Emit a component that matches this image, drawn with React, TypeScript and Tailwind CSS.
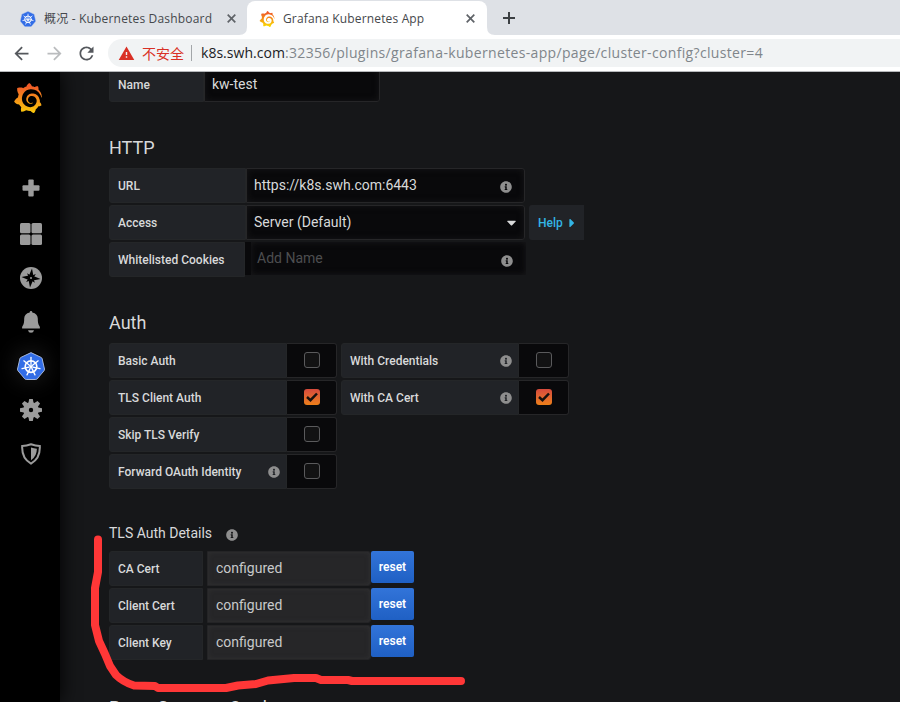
import React from "react";
import { SiGrafana } from "react-icons/si";
import { FaInfoCircle, FaCaretDown, FaCaretRight } from "react-icons/fa";
import { MdArrowBack, MdArrowForward, MdRefresh, MdWarning } from "react-icons/md";

const UI = "font-['Open_Sans','Noto_Sans_CJK_SC',sans-serif]";

function GrafanaMark({ size, id, top, bottom }: { size: number; id: string; top: string; bottom: string }) {
  return (
    <>
      <svg width="0" height="0" className="absolute">
        <defs>
          <linearGradient id={id} x1="0" y1="0" x2="0" y2="1">
            <stop offset="0.1" stopColor={top} />
            <stop offset="1" stopColor={bottom} />
          </linearGradient>
        </defs>
      </svg>
      <SiGrafana size={size} fill={`url(#${id})`} className="shrink-0" />
    </>
  );
}

function KubeMark({ size }: { size: number }) {
  return (
    <svg width={size} height={size} viewBox="0 0 28 28" className="shrink-0">
      <path
        d="M14 0.6 L24.2 5.4 Q25 5.9 25.2 6.8 L27.5 17 Q27.6 18 27 18.8 L20.3 26.8 Q19.6 27.5 18.6 27.5 H9.4 Q8.4 27.5 7.7 26.8 L1 18.8 Q0.4 18 0.5 17 L2.8 6.8 Q3 5.9 3.8 5.4 Z"
        fill="#326de6"
        stroke="#c9d6ee"
        strokeWidth="0.8"
      />
      <g stroke="#fff" fill="none" strokeWidth="1.3" strokeLinecap="round">
        <circle cx="14" cy="14.6" r="5.8" strokeWidth="1.7" />
        {[0, 1, 2, 3, 4, 5, 6].map((i) => (
          <path key={i} d="M14 12.6V5.4" transform={`rotate(${(i * 360) / 7} 14 14.6)`} />
        ))}
      </g>
      <circle cx="14" cy="14.6" r="1.6" fill="#fff" />
    </svg>
  );
}

function Close() {
  return (
    <svg width="9" height="9" viewBox="0 0 9 9" className="shrink-0" stroke="#5f6368" strokeWidth="1.7">
      <path d="M0.7 0.7L8.3 8.3M8.3 0.7L0.7 8.3" />
    </svg>
  );
}

function TabStrip() {
  return (
    <div className="flex h-[35px] bg-[#dee1e6] text-[#45484c]">
      <div className="flex w-[247px] items-center pl-[20px] pt-[2px]">
        <KubeMark size={16} />
        <span className="ml-[8px] w-[168px] whitespace-nowrap text-[12px] tracking-[0.18px]">概况 - Kubernetes Dashboard</span>
        <span className="ml-[15px] flex"><Close /></span>
      </div>
      <div className="relative mt-px flex w-[240px] items-center rounded-t-[8px] bg-white pl-[12px] pt-px">
        <svg width="8" height="8" className="absolute -left-[8px] bottom-0"><path d="M8 0V8H0Q8 8 8 0" fill="#fff" /></svg>
        <svg width="8" height="8" className="absolute -right-[8px] bottom-0"><path d="M0 0V8H8Q0 8 0 0" fill="#fff" /></svg>
        <GrafanaMark size={16} id="tabMark" top="#f05a28" bottom="#fbe000" />
        <span className="ml-[8px] w-[144px] whitespace-nowrap text-[12px] tracking-[0.15px]">Grafana Kubernetes App</span>
        <span className="ml-[39px] flex"><Close /></span>
      </div>
      <svg width="12" height="12" className="ml-[16px] mt-[12px]" stroke="#3c4043" strokeWidth="2"><path d="M6 0V12M0 6H12" /></svg>
    </div>
  );
}

function AddressBar() {
  return (
    <div className="flex h-[37px] items-center border-b border-[#b6b8bb] bg-white">
      <MdArrowBack size={21} color="#55585d" className="ml-[11px]" />
      <MdArrowForward size={21} color="#babcbe" className="ml-[12px]" />
      <MdRefresh size={21} color="#55585d" className="ml-[11px]" />
      <div className="ml-[11px] flex h-[28px] flex-1 items-center rounded-l-full bg-[#f1f3f4] pl-[10px]">
        <MdWarning size={17} color="#d93025" />
        <span className="ml-[7px] w-[43px] whitespace-nowrap font-['Noto_Sans_CJK_SC',sans-serif] text-[14px] text-[#d93025]">不安全</span>
        <span className="ml-[6px] h-[16px] w-px bg-[#a3a6a9]" />
        <span className="-mt-[2px] ml-[9px] whitespace-nowrap text-[14px] tracking-[0.34px] text-[#80868b]">
          <span className="tracking-[0.03px] text-[#202124]">k8s.swh.com</span>:32356/plugins/grafana-kubernetes-app/page/cluster-config?cluster=4
        </span>
      </div>
    </div>
  );
}

function SideMenu() {
  return (
    <nav className="relative flex w-[60px] shrink-0 flex-col items-center bg-black pl-px text-[#9b9b9b] shadow-[0_0_20px_#000]">
      <div className="-ml-[5px] mt-[10px] flex h-[32px] items-center"><GrafanaMark size={30} id="menuMark" top="#f05a28" bottom="#fbca0a" /></div>
      <div className="mt-[52px] flex flex-col items-center">
        <div className="flex h-[44px] items-center">
          <svg width="18" height="18" fill="currentColor">
            <rect x="6.3" y="0.5" width="5.4" height="17" rx="1" />
            <rect x="0.5" y="6.3" width="17" height="5.4" rx="1" />
          </svg>
        </div>
        <div className="flex h-[46px] items-center pt-px">
          <svg width="22" height="22" fill="currentColor">
            <rect width="10.5" height="10.3" rx="1.5" />
            <rect x="11.5" width="10.5" height="10.3" rx="1.5" />
            <rect y="11.5" width="10.5" height="10.5" rx="1.5" />
            <rect x="11.5" y="11.5" width="10.5" height="10.5" rx="1.5" />
          </svg>
        </div>
        <div className="flex h-[44px] items-center">
          <svg width="22" height="22" viewBox="0 0 22 22">
            <circle cx="11" cy="11" r="11" fill="currentColor" />
            <g transform="rotate(6 11 11)" fill="#000">
              <path d="M11 1.4L13.2 8.8L20.6 11L13.2 13.2L11 20.6L8.8 13.2L1.4 11L8.8 8.8Z" />
              <path d="M6.6 6.6L11 8.8L15.4 6.6L13.2 11L15.4 15.4L11 13.2L6.6 15.4L8.8 11Z" />
            </g>
            <circle cx="11" cy="11" r="1" fill="currentColor" />
          </svg>
        </div>
        <div className="flex h-[44px] items-center">
          <svg width="18" height="22" viewBox="0 0 18 22" fill="currentColor">
            <path d="M9 0C9.8 0 10.3.6 10.3 1.4C13.9 2 15.8 4.5 15.8 7.5C15.8 11 16 13 17.4 15Q18.2 16.3 17.8 17.4H.2Q-.2 16.3.6 15C2 13 2.2 11 2.2 7.5C2.2 4.5 4.1 2 7.7 1.4C7.7.6 8.2 0 9 0ZM6 19.2H12Q11.5 21.8 9 21.8Q6.5 21.8 6 19.2Z" />
          </svg>
        </div>
        <div className="flex h-[44px] items-center"><span className="rounded-full shadow-[0_0_24px_rgba(255,255,255,0.14)]"><KubeMark size={28} /></span></div>
        <div className="flex h-[44px] items-center">
          <svg width="22" height="22" viewBox="0 0 22 22" fill="currentColor">
            <path fillRule="evenodd" d="M11 3.3a7.7 7.7 0 1 0 0 15.4a7.7 7.7 0 0 0 0-15.4ZM11 8.8a2.2 2.2 0 1 1 0 4.4a2.2 2.2 0 0 1 0-4.4Z" />
            {[0, 45, 90, 135, 180, 225, 270, 315].map((a) => (
              <path key={a} d="M9.2 0H12.8L13.8 5H8.2Z" transform={`rotate(${a} 11 11)`} />
            ))}
          </svg>
        </div>
        <div className="flex h-[44px] items-center">
          <svg width="20" height="22" viewBox="0 0 20 22">
            <path d="M10 1.2Q14.5 2.8 18.8 2.9Q19.5 15.5 10 20.6Q.5 15.5 1.2 2.9Q5.5 2.8 10 1.2Z" fill="none" stroke="currentColor" strokeWidth="2" />
            <path d="M10 4.5Q13 5.6 15.9 5.8Q15.8 13.5 10 17.2Z" fill="currentColor" />
          </svg>
        </div>
      </div>
    </nav>
  );
}

const label = "flex h-[35px] items-center border border-[#242628] bg-[#212327] rounded-l-[3px] pl-[8px] text-[12px] font-medium text-[#d8d9da]";
const field = "flex h-[35px] items-center border border-[#262628] bg-[#09090b] rounded-r-[3px] pl-[7px] text-[14px] text-[#d8d9da] shadow-[inset_0_0_6px_rgba(30,30,32,0.7)]";

function Info({ className = "" }: { className?: string }) {
  return <FaInfoCircle size={12} color="#8e8e8e" className={className} />;
}

function Toggle({ text, info, checked }: { text: string; info?: boolean; checked?: boolean }) {
  return (
    <div className="flex w-[228px]">
      <div className={`${label} w-[178px] justify-between pr-[6px]`}>
        <span>{text}</span>
        {info && <Info />}
      </div>
      <div className="flex h-[35px] w-[50px] items-center justify-center rounded-r-[3px] border border-l-0 border-[#262628] bg-[#09090b] pb-px">
        {checked ? (
          <span className="flex size-[16px] items-center justify-center rounded-[3px] bg-linear-to-b from-[#d64a3c] to-[#ed7f16]">
            <svg width="12" height="10" viewBox="0 0 12 10" fill="none" stroke="#16110f" strokeWidth="2.5"><path d="M1 5L4.5 8.2L11 1.5" /></svg>
          </span>
        ) : (
          <span className="size-[16px] rounded-[3px] border border-[#5a5a5c] bg-[#121213]" />
        )}
      </div>
    </div>
  );
}

function SecretRow({ text }: { text: string }) {
  return (
    <div className="flex">
      <div className={`${label} w-[94px]`}>{text}</div>
      <div className="ml-[4px] flex h-[35px] w-[164px] items-center rounded-r-[3px] border border-[#242426] bg-[#262628] pl-[8px] text-[14px] text-[#c8c9ca] shadow-[inset_0_0_5px_#303032]">configured</div>
      <button className="h-[32px] w-[43px] rounded-[2px] bg-linear-to-b from-[#3274d9] to-[#1f60c4] text-[12px] font-semibold text-white">reset</button>
    </div>
  );
}

function RedMark() {
  return (
    <svg width="390" height="172" viewBox="85 530 390 172" className="pointer-events-none absolute left-[85px] top-[458px]" fill="none" stroke="#ff3737" strokeWidth="8" strokeLinecap="round" strokeLinejoin="round">
      <path d="M98 539.5V572L95 588V625L99 641L105 654L110 666L116 675Q123 682 134 685.5L155 686L158 688H226L238 685.5L256 684L268 680.5L294 678H316L321 680H348L352 681H461" />
    </svg>
  );
}

export default function App() {
  return (
    <div className={`flex h-[702px] w-[900px] flex-col overflow-hidden bg-[#161719] ${UI}`}>
      <TabStrip />
      <AddressBar />
      <div className="relative flex h-[630px] overflow-hidden font-[Roboto,sans-serif]">
        <SideMenu />
        <main className="-mt-[5px] flex flex-1 flex-col pl-[49px] text-[#d8d9da]">
          <div className="flex">
            <div className={`${label} w-[95px]`}>Name</div>
            <div className={`${field} w-[176px]`}>kw-test</div>
          </div>
          <h2 className="mt-[32px] text-[18px] leading-[27px]">HTTP</h2>
          <div className="mt-[7px] flex flex-col gap-[2px]">
            <div className="flex">
              <div className={`${label} w-[137px]`}>URL</div>
              <div className={`${field} w-[279px] justify-between pr-[12px]`}>
                <span>https://k8s.swh.com:6443</span><Info className="mt-[3px]" />
              </div>
            </div>
            <div className="flex">
              <div className={`${label} w-[137px]`}>Access</div>
              <div className={`${field} w-[279px] justify-between pr-[5px]`}>
                <span>Server (Default)</span><FaCaretDown size={15} />
              </div>
              <div className="ml-[4px] flex h-[35px] w-[55px] items-center rounded-l-[3px] bg-[#212327] pl-[9px] text-[12px] font-medium text-[#33b5e5]">
                Help<FaCaretRight size={14} className="ml-[2px]" />
              </div>
            </div>
            <div className="flex">
              <div className={`${label} w-[136px]`}>Whitelisted Cookies</div>
              <div className="flex h-[33px] w-[281px] bg-[#09090b] pl-[6px]">
                <div className="flex flex-1 items-center justify-between pl-[6px] pr-[13px] text-[14px] text-[#4d4e50] shadow-[inset_0_0_6px_rgba(30,30,32,0.8)]">
                  <span>Add Name</span><Info className="mt-[5px]" />
                </div>
              </div>
            </div>
          </div>
          <h2 className="mt-[32px] text-[18px] leading-[27px]">Auth</h2>
          <div className="mt-[7px] grid w-[460px] grid-cols-[228px_228px] gap-x-[4px] gap-y-[2px]">
            <Toggle text="Basic Auth" />
            <Toggle text="With Credentials" info />
            <Toggle text="TLS Client Auth" checked />
            <Toggle text="With CA Cert" info checked />
            <div className="col-span-2"><Toggle text="Skip TLS Verify" /></div>
            <div className="col-span-2"><Toggle text="Forward OAuth Identity" info /></div>
          </div>
          <div className="mt-[34px] flex h-[21px] items-center text-[14px]">
            TLS Auth Details<Info className="ml-[14px] mt-[3px]" />
          </div>
          <div className="mt-[7px] flex flex-col gap-[2px]">
            <SecretRow text="CA Cert" />
            <SecretRow text="Client Cert" />
            <SecretRow text="Client Key" />
          </div>
          <h2 className="mt-[34px] whitespace-nowrap text-[18px] leading-[27px] tracking-[0.2px]">Prom Sources Cred</h2>
        </main>
        <RedMark />
      </div>
    </div>
  );
}
